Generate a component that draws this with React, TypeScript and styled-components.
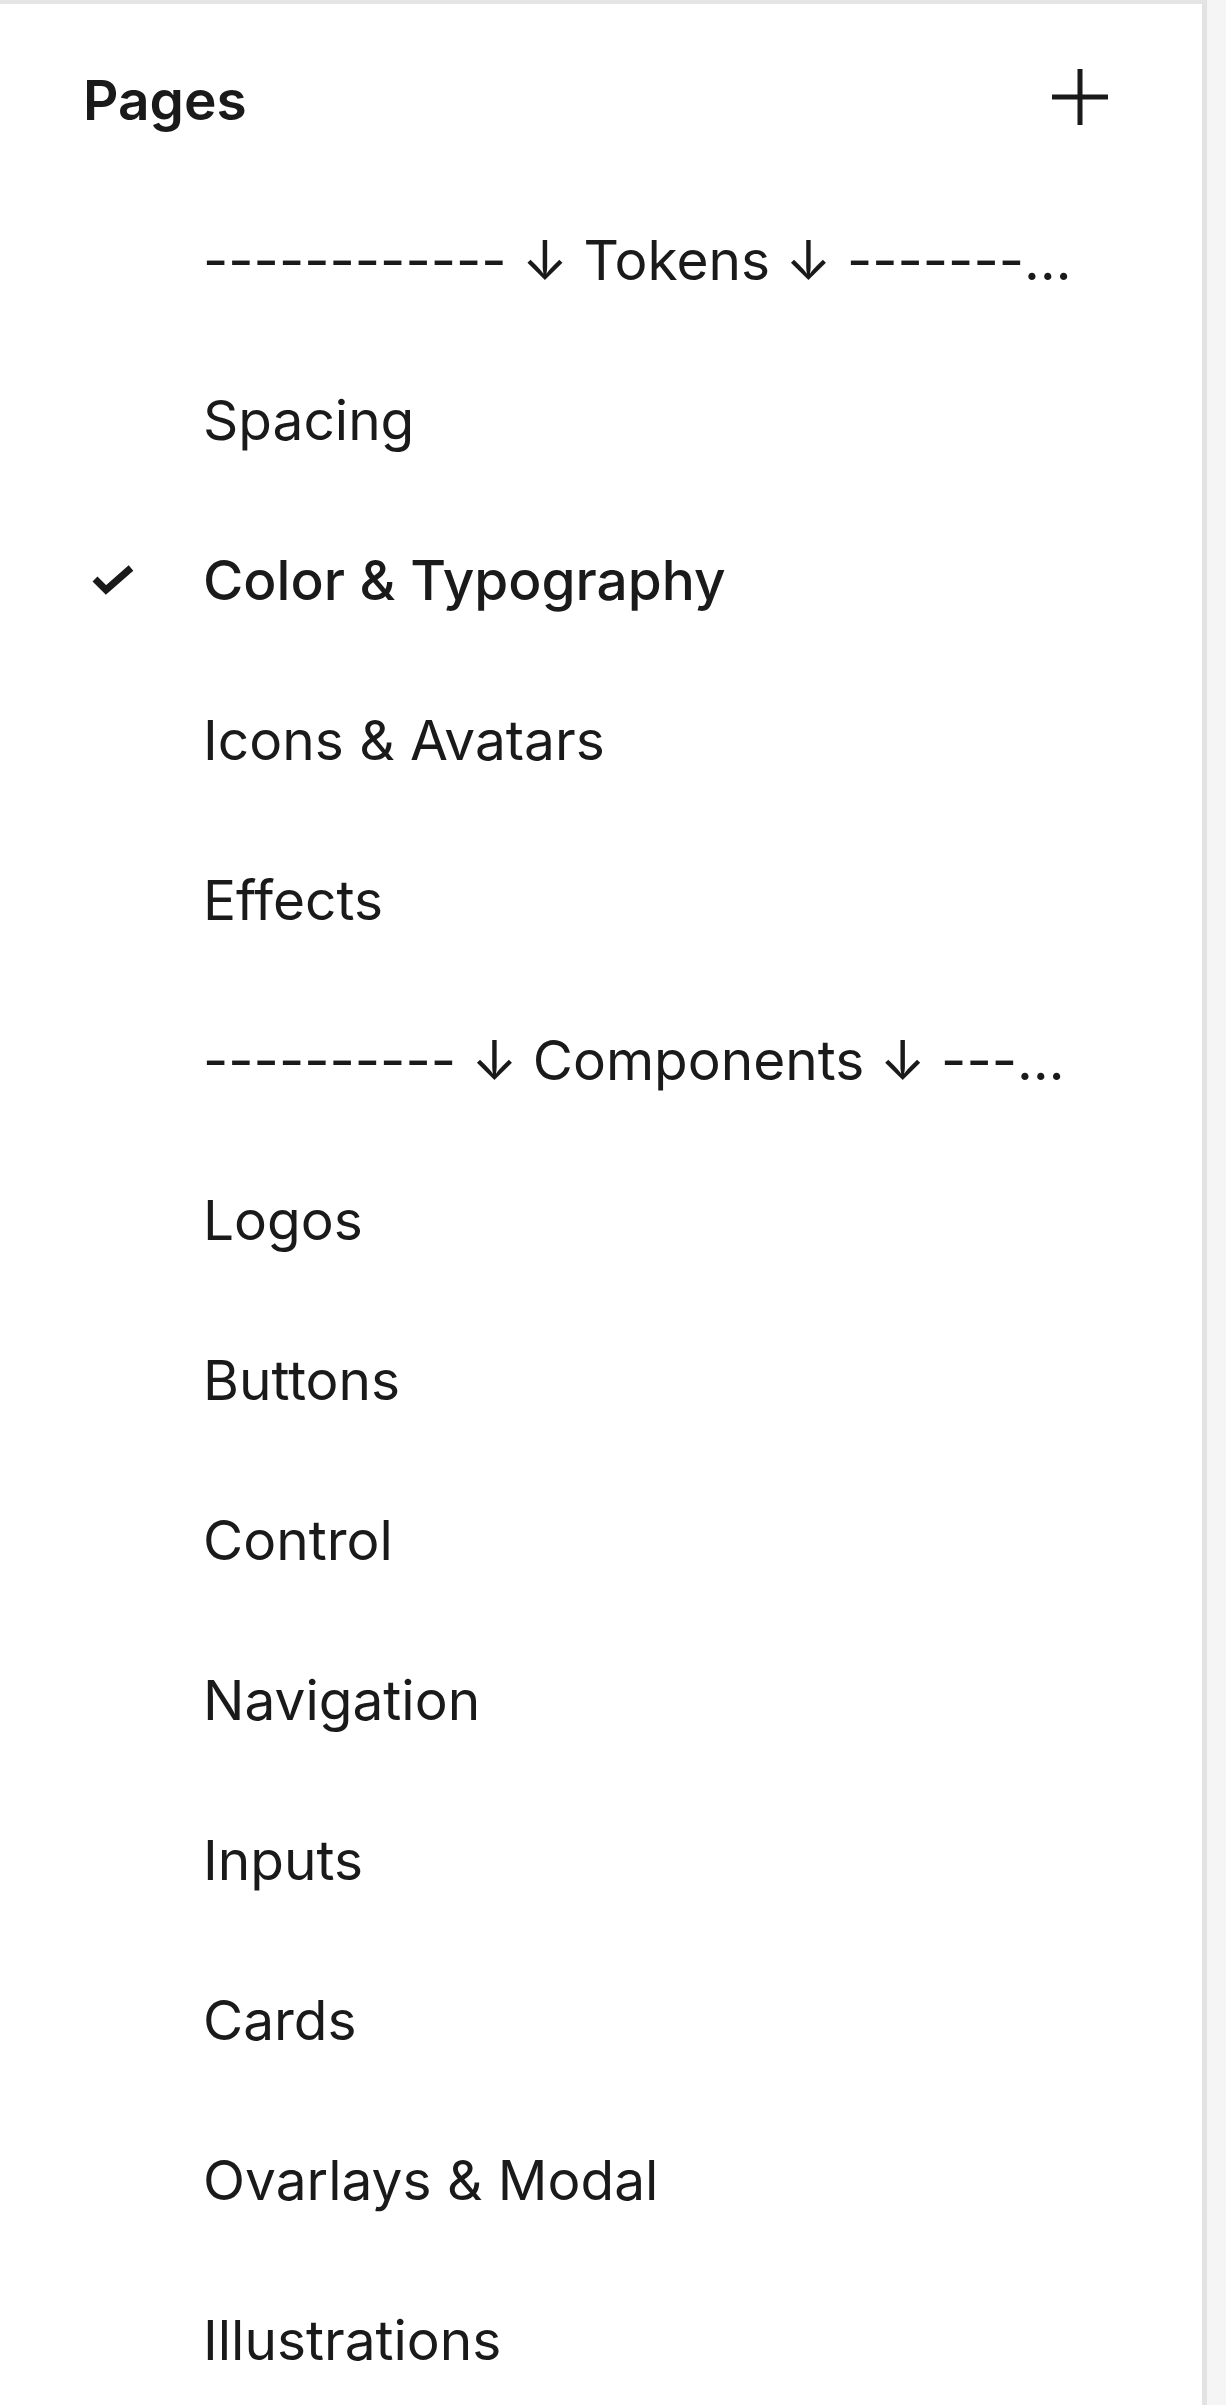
import React from 'react';
import styled, { createGlobalStyle } from 'styled-components';

const pages = [
  { name: '------------ ↓ Tokens ↓ ------------' },
  { name: 'Spacing' },
  { name: 'Color & Typography', current: true },
  { name: 'Icons & Avatars' },
  { name: 'Effects' },
  { name: '---------- ↓ Components ↓ ----------' },
  { name: 'Logos' },
  { name: 'Buttons' },
  { name: 'Control' },
  { name: 'Navigation' },
  { name: 'Inputs' },
  { name: 'Cards' },
  { name: 'Ovarlays & Modal' },
  { name: 'Illustrations' },
];

const App = () => {
  return (
    <Layout>
      <GlobalStyle />
      <Panel>
        <Header>
          <Title>Pages</Title>
          <AddButton aria-label="Add page">
            <svg width="56" height="56" viewBox="0 0 56 56">
              <path d="M28 0V56M0 28H56" stroke="#1a1a1a" strokeWidth="5" fill="none" />
            </svg>
          </AddButton>
        </Header>

        <PageList>
          {pages.map((page) => (
            <PageRow key={page.name}>
              <CheckSlot>
                {page.current && (
                  <svg width="42" height="30" viewBox="0 0 42 30">
                    <path d="M3 14L14 25L39 3" stroke="#1a1a1a" strokeWidth="7" fill="none" />
                  </svg>
                )}
              </CheckSlot>
              <PageName $current={page.current}>{page.name}</PageName>
            </PageRow>
          ))}
        </PageList>
      </Panel>
      <SideGutter />
    </Layout>
  );
};

const GlobalStyle = createGlobalStyle`
  html, body {
    margin: 0;
    padding: 0;
    overflow: hidden;
    background: #f5f5f5;
  }
  * {
    box-sizing: border-box;
  }
`;

const Layout = styled.div`
  display: flex;
  height: 100vh;
  overflow: hidden;
  font-family: 'Inter', 'Noto Sans', sans-serif;
  color: #1a1a1a;
`;

const Panel = styled.div`
  width: 1207px;
  flex-shrink: 0;
  background-color: #ffffff;
  border-top: 4px solid #e5e5e5;
  border-right: 5px solid #e3e3e3;
`;

const SideGutter = styled.div`
  flex: 1;
  background-color: #f5f5f5;
`;

const Header = styled.div`
  display: flex;
  justify-content: space-between;
  align-items: center;
  height: 176px;
  padding: 16px 94px 0 83px;
`;

const Title = styled.div`
  font-size: 55px;
  font-weight: 600;
  line-height: 64px;
`;

const AddButton = styled.div`
  display: flex;
  width: 56px;
  height: 56px;
  margin-top: -6px;
`;

const PageList = styled.div`
  display: flex;
  flex-direction: column;
`;

const PageRow = styled.div`
  display: flex;
  align-items: center;
  height: 160px;
  padding: 0 113px 0 92px;
`;

const CheckSlot = styled.div`
  display: flex;
  align-items: center;
  width: 111px;
  flex-shrink: 0;
`;

const PageName = styled.div<{ $current?: boolean }>`
  flex: 1;
  min-width: 0;
  font-size: 55px;
  font-weight: ${(p) => (p.$current ? 500 : 400)};
  line-height: 64px;
  white-space: nowrap;
  overflow: hidden;
  text-overflow: ellipsis;
`;

export default App;
